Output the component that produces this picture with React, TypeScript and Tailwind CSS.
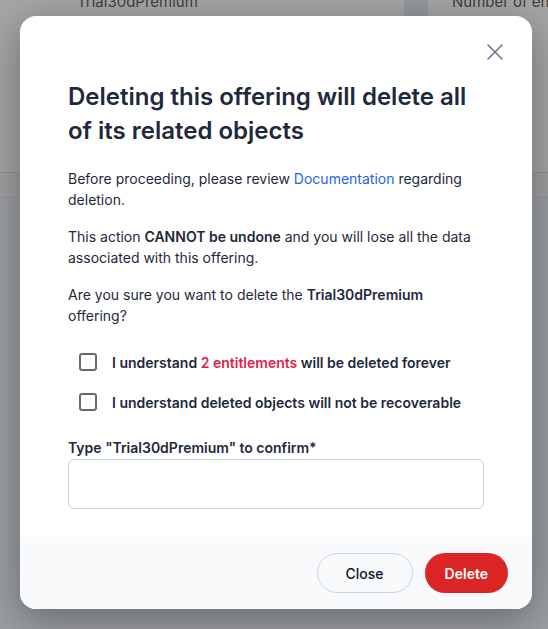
import React, { useState } from 'react';

const font = { fontFamily: 'Inter, "Noto Sans", sans-serif' };

const CloseIcon: React.FC = () => (
  <svg width="16" height="16" viewBox="0 0 16 16" fill="none" stroke="#64748b" strokeWidth="1.5" strokeLinecap="round">
    <path d="M1 1l14 14M15 1L1 15" />
  </svg>
);

const Check: React.FC<{ children: React.ReactNode }> = ({ children }) => {
  const [on, setOn] = useState(false);
  return (
    <label className="flex items-center h-[40px] pl-[11px] cursor-pointer">
      <input
        type="checkbox"
        checked={on}
        onChange={() => setOn(!on)}
        className="appearance-none w-[18px] h-[18px] border-2 border-[#6b6b6b] rounded-[3px] bg-white shrink-0"
      />
      <span className="ml-[15px] text-[14px] font-semibold text-[#1e293b]">{children}</span>
    </label>
  );
};

const App: React.FC = () => {
  const [value, setValue] = useState('');

  return (
    <div className="relative w-[548px] h-[629px] overflow-hidden" style={font}>
      {/* page behind the overlay */}
      <div className="flex flex-col h-full">
        <div className="h-[172px] bg-[#a5a5a5] flex text-[15px] text-[#3f3f3f]">
          <div className="w-[404px] shrink-0 pl-[77px] -mt-[9px]">Trial30dPremium</div>
          <div className="w-[24px] h-[16px] shrink-0 bg-[#95989c]" />
          <div className="pl-[24px] -mt-[9px] whitespace-nowrap">Number of entitlements</div>
        </div>
        <div className="h-px bg-[#929292]" />
        <div className="h-[24px] bg-[#a0a0a0]" />
        <div className="h-px bg-[#959799]" />
        <div className="flex-1 bg-[#9b9ea3]" />
      </div>

      {/* modal */}
      <div className="absolute left-[20px] top-[16px] w-[512px] h-[593px] bg-white rounded-[16px] overflow-hidden flex flex-col shadow-[0_10px_40px_rgba(0,0,0,0.35)]">
        <button className="absolute right-[29px] top-[28px]">
          <CloseIcon />
        </button>
        <div className="flex-1 px-[48px] pt-[64px]">
          <h2 className="text-[24px] leading-[34px] font-semibold text-[#1e293b] pr-[10px]">
            Deleting this offering will delete all of its related objects
          </h2>
          <div className="mt-[20px] text-[14px] leading-[21px] text-[#1e293b] space-y-[16px]">
            <p>
              Before proceeding, please review <a className="text-[#2563eb]">Documentation</a> regarding deletion.
            </p>
            <p>
              This action <b className="font-semibold">CANNOT be undone</b> and you will lose all the data associated with this offering.
            </p>
            <p>
              Are you sure you want to delete the <b className="font-semibold">Trial30dPremium</b> offering?
            </p>
          </div>
          <div className="mt-[16px]">
            <Check>
              I understand <span className="text-[#e11d48]">2 entitlements</span> will be deleted forever
            </Check>
            <Check>I understand deleted objects will not be recoverable</Check>
          </div>
          <div className="mt-[15px]">
            <div className="text-[14px] leading-[21px] font-semibold text-[#1e293b]">
              Type "Trial30dPremium" to confirm*
            </div>
            <input
              value={value}
              onChange={e => setValue(e.target.value)}
              className="mt-[1px] w-full h-[50px] border border-[#cbd5e1] rounded-[6px] px-3 text-[14px] outline-none"
            />
          </div>
        </div>
        <div className="h-[72px] bg-[#f8fafc] flex items-center justify-end gap-[12px] px-[24px]">
          <button className="h-[40px] px-[28px] rounded-full border border-[#cbd5e1] bg-[#f8fafc] text-[14px] font-medium text-[#0f172a]">
            Close
          </button>
          <button className="h-[40px] px-[20px] rounded-full bg-[#dc2626] text-[14px] font-semibold text-white">
            Delete
          </button>
        </div>
      </div>
    </div>
  );
};

export default App;
